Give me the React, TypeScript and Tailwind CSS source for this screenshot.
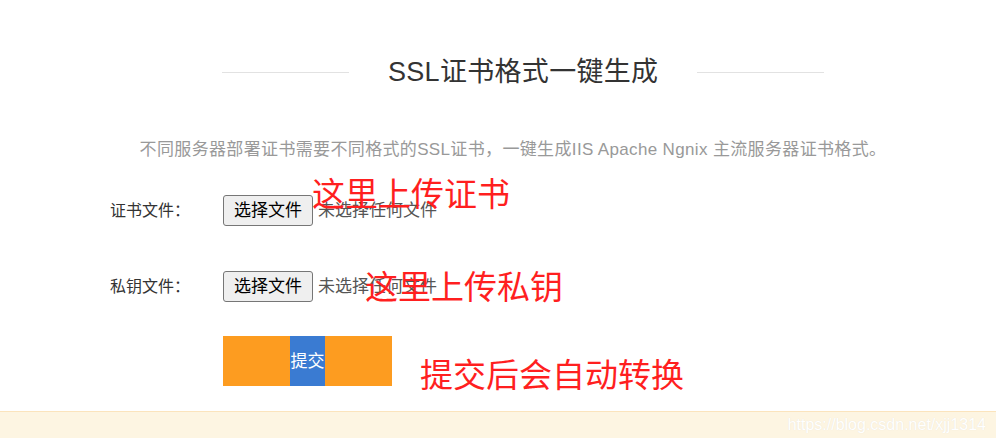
import React from "react";

const cjk = "font-['Liberation_Sans','Noto_Sans_CJK_SC',sans-serif]";

function FileRow({ label, top }: { label: string; top: string }) {
    return (
        <div className={`flex items-center pl-[110px] h-[31px] ${top}`}>
            <span className="w-[113px] text-[16px] text-[#333]">{label}</span>
            <button className="h-[31px] px-[10px] text-[17px] leading-none text-black bg-[#efefef] border border-[#767676] rounded-[3px]">
                选择文件
            </button>
            <span className="ml-[5px] text-[17px] text-[#555]">未选择任何文件</span>
        </div>
    );
}

export default function App() {
    return (
        <div className={`relative w-[996px] h-[438px] bg-white flex flex-col overflow-hidden ${cjk}`}>
            <main className="flex-1 flex flex-col">
                {/* Title */}
                <div className="flex items-center pl-[222px] mt-[52px] h-[40px]">
                    <div className="w-[127px] h-px bg-[#e2e2e2]"></div>
                    <h1 className="mx-[39px] text-[27px] leading-none text-[#333] whitespace-nowrap tracking-[0.3px]">SSL证书格式一键生成</h1>
                    <div className="w-[127px] h-px bg-[#e2e2e2]"></div>
                </div>

                <p className="mt-[48px] h-[20px] leading-[20px] pl-[30px] text-center text-[17px] text-[#999] whitespace-nowrap tracking-[0.35px]">
                    不同服务器部署证书需要不同格式的SSL证书，一键生成IIS Apache Ngnix 主流服务器证书格式。
                </p>

                <FileRow label="证书文件：" top="mt-[35px]" />
                <FileRow label="私钥文件：" top="mt-[45px]" />

                {/* Submit */}
                <div className="mt-[34px] ml-[223px] w-[169px] h-[50px] bg-[#fd9c20] flex justify-center">
                    <button className="w-[35px] h-full bg-[#3a7bd2] text-white text-[17px] leading-none flex items-center justify-center whitespace-nowrap">
                        提交
                    </button>
                </div>
            </main>

            {/* Watermark footer */}
            <footer className="h-[27px] bg-[#fdf5e2] border-t border-[#fbe4bd] flex items-center justify-end pr-[10px]">
                <span className="font-['Liberation_Sans',sans-serif] text-[16px] text-white [text-shadow:0_0_1px_#e6e0d2]">
                    https://blog.csdn.net/xjj1314
                </span>
            </footer>

            {/* Red annotations */}
            <span className="absolute left-[312px] top-[178px] text-[33px] leading-none text-[#ff1f1f] whitespace-nowrap">这里上传证书</span>
            <span className="absolute left-[365px] top-[271px] text-[33px] leading-none text-[#ff1f1f] whitespace-nowrap">这里上传私钥</span>
            <span className="absolute left-[420px] top-[359px] text-[33px] leading-none text-[#ff1f1f] whitespace-nowrap">提交后会自动转换</span>
        </div>
    );
}
